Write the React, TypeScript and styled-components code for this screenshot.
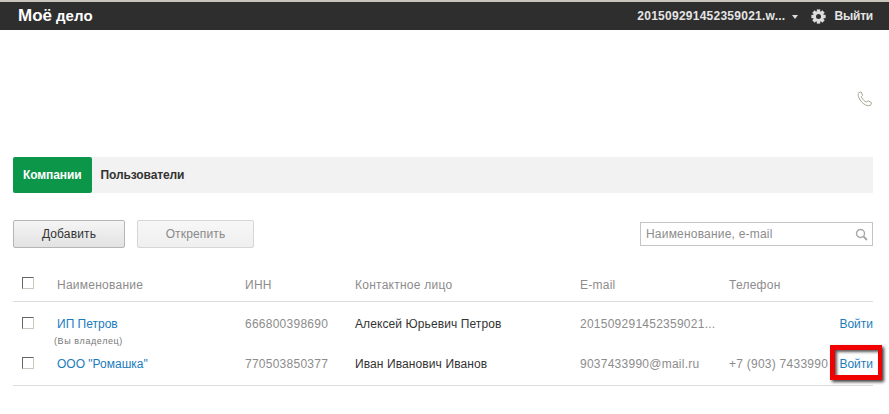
import styled, { createGlobalStyle } from "styled-components";

const GlobalStyle = createGlobalStyle`
  html, body {
    margin: 0;
    padding: 0;
    background: #fff;
    font-family: "Liberation Sans", Arial, sans-serif;
    font-size: 12px;
    color: #333;
  }
`;

const Page = styled.div`
  position: relative;
  width: 889px;
  height: 414px;
  overflow: hidden;
  background: #fff;
`;

const TopBar = styled.header`
  height: 28px;
  border-top: 2px solid #c9c5bc;
  background: #2e2e2e;
  display: flex;
  align-items: center;
  justify-content: space-between;
  padding: 0 16px 0 18px;
  color: #e4e4e4;
  font-weight: bold;
`;

const Logo = styled.div`
  display: flex;
  align-items: baseline;
  gap: 4px;
  color: #fff;
  font-weight: bold;
  line-height: 28px;
`;

const LogoBig = styled.span`
  font-size: 17px;
`;

const LogoSmall = styled.span`
  font-size: 15px;
  letter-spacing: 0.1px;
`;

const UserMenu = styled.div`
  display: flex;
  align-items: center;
`;

const UserName = styled.span`
  letter-spacing: 0.25px;
`;

const Caret = styled.span`
  width: 0;
  height: 0;
  margin: 2px 13px 0 7px;
  border-left: 3px solid transparent;
  border-right: 3px solid transparent;
  border-top: 4px solid #ddd;
`;

const Logout = styled.span`
  margin-left: 8px;
  letter-spacing: -0.2px;
`;

const Content = styled.main`
  padding: 0 16px 0 13px;
`;

const PhoneRow = styled.div`
  height: 127px;
  display: flex;
  justify-content: flex-end;
  padding-top: 61px;
  box-sizing: border-box;
`;

const Tabs = styled.nav`
  height: 36px;
  display: flex;
  align-items: center;
  background: #f2f2f2;
`;

const Tab = styled.div<{ $active?: boolean }>`
  height: 36px;
  line-height: 36px;
  padding: 0 10px;
  font-weight: bold;
  letter-spacing: -0.1px;
  border-radius: ${(p) => (p.$active ? "2px" : "0")};
  background: ${(p) => (p.$active ? "#0c9649" : "transparent")};
  color: ${(p) => (p.$active ? "#fff" : "#333")};
  margin-left: ${(p) => (p.$active ? "0" : "-1px")};
`;

const Toolbar = styled.div`
  margin-top: 27px;
  display: flex;
  align-items: center;
`;

const Button = styled.button<{ $disabled?: boolean; $width: number }>`
  height: 28px;
  width: ${(p) => p.$width}px;
  margin-right: 12px;
  padding: 0;
  font: inherit;
  letter-spacing: 0.15px;
  border-radius: 2px;
  border: 1px solid ${(p) => (p.$disabled ? "#d6d6d6" : "#b5b5b5")};
  color: ${(p) => (p.$disabled ? "#8a8a8a" : "#333")};
  background: ${(p) =>
    p.$disabled ? "linear-gradient(#f7f7f7, #efefef)" : "linear-gradient(#f5f5f5, #e2e2e2)"};
`;

const Search = styled.div`
  margin-left: auto;
  width: 233px;
  height: 24px;
  box-sizing: border-box;
  border: 1px solid #c4c4c4;
  display: flex;
  align-items: center;
  justify-content: space-between;
  padding: 0 4px 0 5px;
  color: #8c8c8c;
  letter-spacing: 0.2px;
`;

const Table = styled.table`
  margin-top: 14px;
  width: 860px;
  table-layout: fixed;
  border-collapse: collapse;
  letter-spacing: 0.25px;
`;

const HeadCell = styled.th`
  height: 39px;
  padding: 16px 0 0;
  box-sizing: border-box;
  vertical-align: top;
  text-align: left;
  font-weight: normal;
  line-height: 14px;
  color: #8c8c8c;
  border-bottom: 1px solid #dcdcdc;
`;

const Row = styled.tr<{ $last?: boolean }>`
  border-bottom: ${(p) => (p.$last ? "1px solid #dcdcdc" : "none")};
`;

const Cell = styled.td<{ $tone?: "grey" | "dark"; $right?: boolean }>`
  padding: 0;
  vertical-align: top;
  white-space: nowrap;
  line-height: 14px;
  color: ${(p) => (p.$tone === "grey" ? "#8c8c8c" : "#333")};
  text-align: ${(p) => (p.$right ? "right" : "left")};
`;

const RowInner = styled.div<{ $height: number; $top: number }>`
  height: ${(p) => p.$height}px;
  padding-top: ${(p) => p.$top}px;
  box-sizing: border-box;
`;

const ContactName = styled.span`
  letter-spacing: 0.1px;
`;

const Link = styled.a`
  color: #1b7cbd;
  text-decoration: none;
  letter-spacing: 0;
`;

const Owner = styled.div`
  margin: 5px 0 0 -3px;
  font-size: 9px;
  line-height: 11px;
  letter-spacing: 0.6px;
  color: #777;
`;

const Check = styled.span`
  display: block;
  width: 10px;
  height: 10px;
  margin: 0 0 0 9px;
  border: 1px solid;
  border-color: #666 #ccc9c0 #ccc9c0 #666;
  background: #fff;
`;

const HeadCheck = styled(Check)`
  margin-top: -1px;
`;

const Highlight = styled.div`
  position: absolute;
  left: 830px;
  top: 345px;
  width: 43px;
  height: 25px;
  border: 5px solid #f00000;
  border-right-width: 4px;
  box-shadow: 2px 2px 3px rgba(0, 0, 0, 0.75), inset 2px 2px 3px rgba(0, 0, 0, 0.65);
`;

const GearIcon = () => (
  <svg width="15" height="15" viewBox="0 0 15 15" aria-hidden="true">
    <g fill="#dcdcdc">
      <circle cx="7.5" cy="7.5" r="5.4" />
      {[0, 45, 90, 135].map((a) => (
        <rect key={a} x="5.8" y="0.4" width="3.4" height="14.2" transform={`rotate(${a} 7.5 7.5)`} />
      ))}
    </g>
    <circle cx="7.5" cy="7.5" r="2.5" fill="#2e2e2e" />
  </svg>
);

const PhoneIcon = () => (
  <svg width="16" height="16" viewBox="0 0 16 16" fill="none" aria-hidden="true">
    <path
      d="M2 1.5 L4.2 1 L5.6 4.4 L4.4 5.6 C5 8 7.4 10.4 9.6 11 L11 9.8 L14.4 11.6 L14 13.6 C13 15 10.8 15 8.6 14 C5 12.2 2.6 9 1.4 5.4 C1 4 1.2 2.4 2 1.5 Z"
      stroke="#a9a596"
      strokeWidth="1"
    />
  </svg>
);

const SearchIcon = () => (
  <svg width="13" height="13" viewBox="0 0 13 13" fill="none" aria-hidden="true">
    <circle cx="5.5" cy="5.5" r="4" stroke="#a8a8a8" strokeWidth="1.4" />
    <path d="M8.5 8.5 L12 12" stroke="#a8a8a8" strokeWidth="1.8" />
  </svg>
);

export default function App() {
  return (
    <Page>
      <GlobalStyle />
      <TopBar>
        <Logo>
          <LogoBig>Моё</LogoBig>
          <LogoSmall>дело</LogoSmall>
        </Logo>
        <UserMenu>
          <UserName>201509291452359021.w...</UserName>
          <Caret />
          <GearIcon />
          <Logout>Выйти</Logout>
        </UserMenu>
      </TopBar>
      <Content>
        <PhoneRow>
          <PhoneIcon />
        </PhoneRow>
        <Tabs>
          <Tab $active>Компании</Tab>
          <Tab>Пользователи</Tab>
        </Tabs>
        <Toolbar>
          <Button $width={112}>Добавить</Button>
          <Button $width={117} $disabled>Открепить</Button>
          <Search>
            <span>Наименование, e-mail</span>
            <SearchIcon />
          </Search>
        </Toolbar>
        <Table>
          <colgroup>
            <col style={{ width: 44 }} />
            <col style={{ width: 188 }} />
            <col style={{ width: 110 }} />
            <col style={{ width: 225 }} />
            <col style={{ width: 149 }} />
            <col style={{ width: 100 }} />
            <col style={{ width: 44 }} />
          </colgroup>
          <thead>
            <tr>
              <HeadCell><HeadCheck /></HeadCell>
              <HeadCell>Наименование</HeadCell>
              <HeadCell>ИНН</HeadCell>
              <HeadCell>Контактное лицо</HeadCell>
              <HeadCell>E-mail</HeadCell>
              <HeadCell>Телефон</HeadCell>
              <HeadCell />
            </tr>
          </thead>
          <tbody>
            <Row>
              <Cell><RowInner $height={46} $top={15}><Check /></RowInner></Cell>
              <Cell>
                <RowInner $height={46} $top={15}>
                  <Link>ИП Петров</Link>
                  <Owner>(Вы владелец)</Owner>
                </RowInner>
              </Cell>
              <Cell $tone="grey"><RowInner $height={46} $top={15}>666800398690</RowInner></Cell>
              <Cell><RowInner $height={46} $top={15}><ContactName>Алексей Юрьевич Петров</ContactName></RowInner></Cell>
              <Cell $tone="grey"><RowInner $height={46} $top={15}>201509291452359021...</RowInner></Cell>
              <Cell $tone="grey"><RowInner $height={46} $top={15} /></Cell>
              <Cell $right><RowInner $height={46} $top={15}><Link>Войти</Link></RowInner></Cell>
            </Row>
            <Row $last>
              <Cell><RowInner $height={37} $top={9}><Check /></RowInner></Cell>
              <Cell><RowInner $height={37} $top={9}><Link>ООО "Ромашка"</Link></RowInner></Cell>
              <Cell $tone="grey"><RowInner $height={37} $top={9}>770503850377</RowInner></Cell>
              <Cell><RowInner $height={37} $top={9}><ContactName>Иван Иванович Иванов</ContactName></RowInner></Cell>
              <Cell $tone="grey"><RowInner $height={37} $top={9}>9037433990@mail.ru</RowInner></Cell>
              <Cell $tone="grey"><RowInner $height={37} $top={9}>+7 (903) 7433990</RowInner></Cell>
              <Cell $right><RowInner $height={37} $top={9}><Link>Войти</Link></RowInner></Cell>
            </Row>
          </tbody>
        </Table>
      </Content>
      <Highlight />
    </Page>
  );
}
